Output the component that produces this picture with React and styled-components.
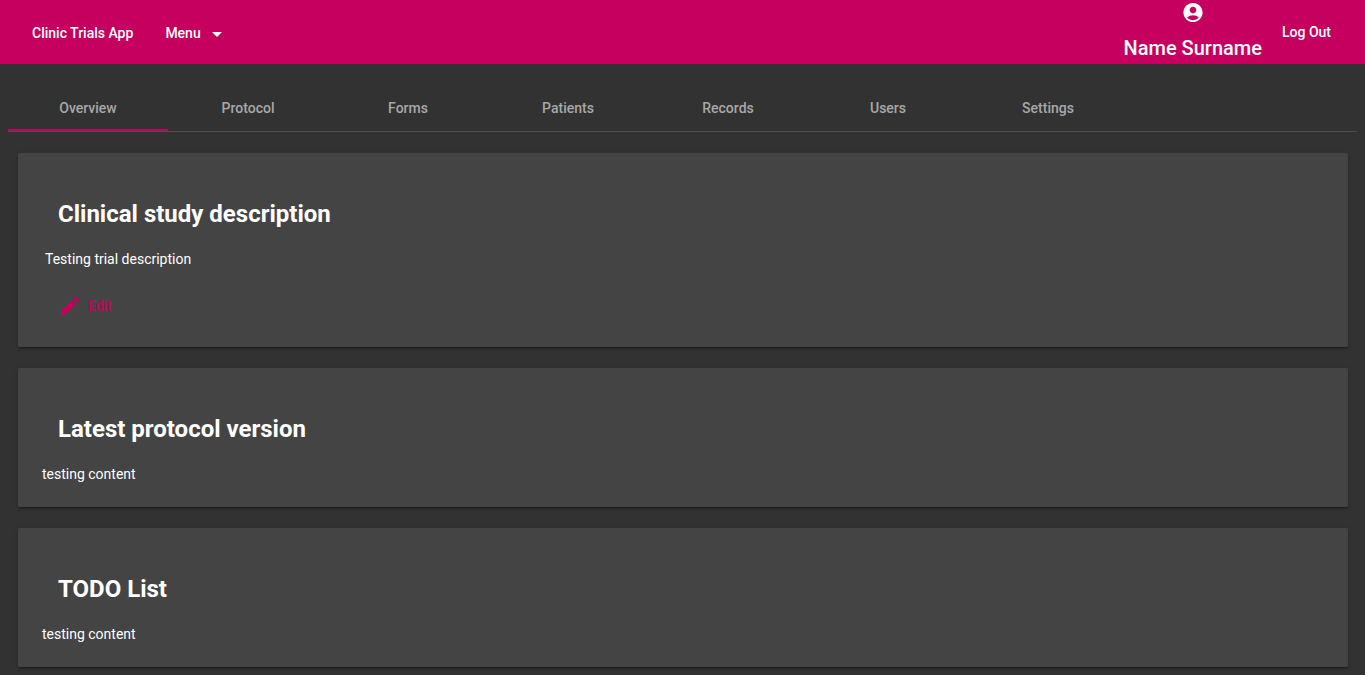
import React, { useState } from 'react';
import styled, { createGlobalStyle } from 'styled-components';
import { MdAccountCircle, MdArrowDropDown, MdEdit } from 'react-icons/md';

const pink = '#c6005e';

const GlobalStyle = createGlobalStyle`
  *, *::before, *::after { box-sizing: border-box; }
  body {
    margin: 0;
    background: #323232;
    color: #fff;
    font: 400 14px/20px Roboto, "Liberation Sans", sans-serif;
  }
`;

const Toolbar = styled.header`
  display: flex;
  align-items: center;
  height: 64px;
  padding: 0 18px 0 16px;
  background: ${pink};
`;

const ToolbarLinks = styled.div`
  display: flex;
  flex: 1;
  padding-top: 2px;
`;

const ToolbarButton = styled.button`
  display: flex;
  align-items: center;
  height: 36px;
  margin: 0;
  padding: 0 16px;
  border: 0;
  background: transparent;
  color: #fff;
  font: 500 14px/36px Roboto, "Liberation Sans", sans-serif;
  cursor: pointer;

  svg {
    margin: 2px 0 0 4px;
  }
`;

const Account = styled.div`
  display: flex;
  flex-direction: column;
  align-items: center;
  gap: 8px;
  height: 64px;
  padding-top: 1px;
  margin-right: 4px;
  font-size: 20px;
  font-weight: 500;
  line-height: 32px;
`;

const Tabs = styled.nav`
  display: flex;
  margin: 20px 8px 0;
  border-bottom: 1px solid #4e4e4e;
`;

const Tab = styled.a`
  flex: 0 1 160px;
  height: 47px;
  border-bottom: 2px solid ${(p) => (p.$active ? pink : 'transparent')};
  color: #a8a8a8;
  font-weight: 500;
  line-height: 48px;
  text-align: center;
  text-decoration: none;
`;

const Main = styled.main`
  display: flex;
  flex-direction: column;
  gap: 21px;
  padding: 21px 17px 9px 18px;
`;

const Card = styled.section`
  padding: 44px 24px 23px;
  border-radius: 2px;
  background: #444;
  box-shadow: 0 3px 1px -2px rgba(0, 0, 0, 0.2), 0 2px 2px 0 rgba(0, 0, 0, 0.14),
    0 1px 5px 0 rgba(0, 0, 0, 0.12);
`;

const CardTitle = styled.h2`
  margin: 0 16px 18px;
  font-size: 24px;
  font-weight: 700;
  line-height: 34px;
`;

const CardText = styled.p`
  margin: 0;
  padding: 0 ${(p) => (p.$inset ? 3 : 0)}px;
  line-height: 20px;
`;

const EditButton = styled.button`
  display: flex;
  align-items: center;
  gap: 6px;
  height: 36px;
  margin: 19px 0 0;
  padding: 0 16px;
  border: 0;
  background: transparent;
  color: ${pink};
  font: 500 14px/36px Roboto, "Liberation Sans", sans-serif;
  cursor: pointer;
`;

const tabs = ['Overview', 'Protocol', 'Forms', 'Patients', 'Records', 'Users', 'Settings'];

export default function App() {
  const [active, setActive] = useState('Overview');

  return (
    <>
      <GlobalStyle />
      <Toolbar>
        <ToolbarLinks>
          <ToolbarButton type="button">Clinic Trials App</ToolbarButton>
          <ToolbarButton type="button" aria-haspopup="menu">
            Menu
            <MdArrowDropDown size={24} aria-hidden="true" />
          </ToolbarButton>
        </ToolbarLinks>
        <Account>
          <MdAccountCircle size={24} aria-hidden="true" />
          <span>Name Surname</span>
        </Account>
        <ToolbarButton type="button">Log Out</ToolbarButton>
      </Toolbar>
      <Tabs>
        {tabs.map((name) => (
          <Tab
            key={name}
            href={`#${name.toLowerCase()}`}
            $active={name === active}
            onClick={() => setActive(name)}
          >
            {name}
          </Tab>
        ))}
      </Tabs>
      <Main>
        <Card>
          <CardTitle>Clinical study description</CardTitle>
          <CardText $inset>Testing trial description</CardText>
          <EditButton type="button">
            <MdEdit size={24} aria-hidden="true" />
            Edit
          </EditButton>
        </Card>
        <Card>
          <CardTitle>Latest protocol version</CardTitle>
          <CardText>testing content</CardText>
        </Card>
        <Card>
          <CardTitle>TODO List</CardTitle>
          <CardText>testing content</CardText>
        </Card>
      </Main>
    </>
  );
}
